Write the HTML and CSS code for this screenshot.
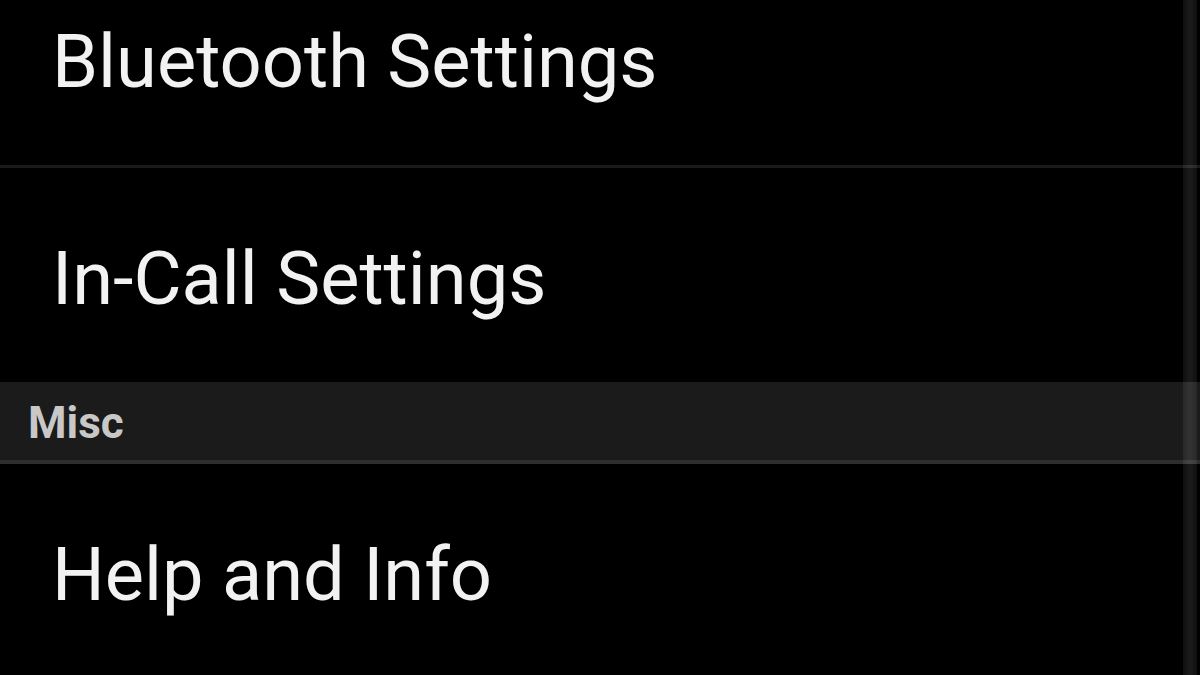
FILE: index.html
```html
<!DOCTYPE html>
<html lang="en">
<head>
  <meta charset="UTF-8" />
  <title>Settings</title>
  <link rel="stylesheet" href="styles.css">
</head>
<body>

  <!-- ===== Settings List ===== -->
  <div class="settings">
    <div class="pref-item">Bluetooth Settings</div>
    <div class="pref-divider"></div>
    <div class="pref-item">In-Call Settings</div>
    <div class="pref-category">Misc</div>
    <div class="pref-item">Help and Info</div>
  </div>

  <!-- scrollbar overlay -->
  <div class="scrollbar"></div>

</body>
</html>
```

FILE: styles.css
```css
body {
  margin: 0;
  padding: 0;
  background: #000;
  color: #f2f2f2;
  font-family: Roboto, 'Noto Sans', sans-serif;
  overflow: hidden;
  height: 675px;
  position: relative;
}

/* ===== Settings List ===== */
.settings {
  margin-top: -49px;
}
.pref-item {
  box-sizing: border-box;
  height: 214px;
  display: flex;
  align-items: center;
  padding: 6px 0 0 52px;
  font-size: 74px;
  white-space: nowrap;
}
.pref-divider {
  height: 3px;
  background: #1a1a1a;
}

/* ===== Category Header ===== */
.pref-category {
  height: 82px;
  display: flex;
  align-items: center;
  padding: 4px 0 0 28px;
  box-sizing: border-box;
  background: #1b1b1b;
  border-bottom: 4px solid #2e2e2e;
  color: #c8c8c8;
  font-size: 44px;
  font-weight: bold;
}

/* ===== Scrollbar ===== */
.scrollbar {
  position: absolute;
  top: 0;
  right: 3px;
  width: 14px;
  height: 100%;
  background: linear-gradient(90deg, rgba(255,255,255,0.06), rgba(255,255,255,0.11) 50%, rgba(255,255,255,0.06));
}
```
